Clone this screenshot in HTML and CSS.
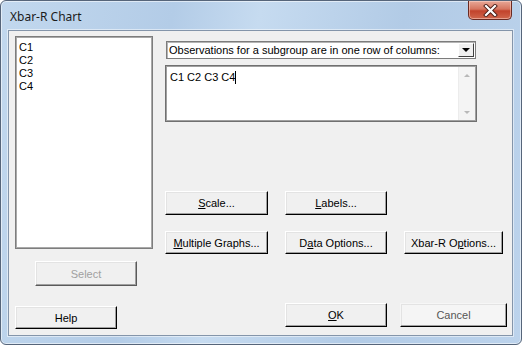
FILE: index.html
```html
<!DOCTYPE html>
<html lang="en">
<head>
    <meta charset="UTF-8">
    <title>Xbar-R Chart</title>
    <link rel="stylesheet" href="styles.css">
</head>
<body>
    <div class="window">
        <div class="titlebar">
            <span class="title">Xbar-R Chart</span>
            <div class="close-button">
                <svg width="15" height="13" viewBox="0 0 15 13">
                    <path d="M3 2 L12 11 M12 2 L3 11" stroke="#4a1d16" stroke-width="4" stroke-linecap="square"/>
                    <path d="M3 2 L12 11 M12 2 L3 11" stroke="#ffffff" stroke-width="2.2" stroke-linecap="square"/>
                </svg>
            </div>
        </div>
        <div class="client">
            <div class="left-col">
                <div class="listbox">
                    <div class="list-item">C1</div>
                    <div class="list-item">C2</div>
                    <div class="list-item">C3</div>
                    <div class="list-item">C4</div>
                </div>
                <button class="btn btn-select" disabled>Select</button>
                <button class="btn btn-help">Help</button>
            </div>
            <div class="right-col">
                <div class="combo">
                    <span class="combo-text">Observations for a subgroup are in one row of columns:</span>
                    <span class="combo-arrow"><span class="arrow-down"></span></span>
                </div>
                <div class="edit">
                    <div class="edit-text">C1 C2 C3 C4<span class="caret"></span></div>
                    <div class="vscroll">
                        <span class="scroll-up"></span>
                        <span class="scroll-down"></span>
                    </div>
                </div>
                <div class="btn-row row-one">
                    <button class="btn w103"><u>S</u>cale...</button>
                    <button class="btn w102"><u>L</u>abels...</button>
                </div>
                <div class="btn-row row-two">
                    <button class="btn w103"><u>M</u>ultiple Graphs...</button>
                    <button class="btn w102">D<u>a</u>ta Options...</button>
                    <button class="btn w99">Xbar-R O<u>p</u>tions...</button>
                </div>
                <div class="btn-row footer">
                    <button class="btn btn-ok"><u>O</u>K</button>
                    <button class="btn btn-cancel">Cancel</button>
                </div>
            </div>
        </div>
    </div>
</body>
</html>
```

FILE: styles.css
```css
body {
    margin: 0;
    padding: 0;
    background: #ffffff;
    font-family: 'Liberation Sans', Arial, sans-serif;
}
.window {
    width: 522px;
    height: 345px;
    box-sizing: border-box;
    border: 1px solid #56657a;
    border-radius: 6px;
    background: linear-gradient(100deg, #c2d8ee 0%, #b3cce7 30%, #c6dbf0 45%, #b2cbe6 70%, #bcd3ec 100%);
    box-shadow: inset 0 0 0 1px rgba(255,255,255,0.55);
    padding: 0 8px 8px 7px;
    display: flex;
    flex-direction: column;
}
.titlebar {
    height: 29px;
    display: flex;
    align-items: flex-start;
}
.title {
    font-family: 'Noto Sans', 'Open Sans', sans-serif;
    font-size: 12px;
    color: #1b1b1b;
    margin: 7px 0 0 2px;
}
.close-button {
    margin-left: auto;
    margin-right: 1px;
    width: 44px;
    height: 19px;
    box-sizing: border-box;
    border: 1px solid #6a2a22;
    border-top: none;
    border-radius: 0 0 5px 5px;
    background: linear-gradient(#e8a897 0%, #d6755f 45%, #c2432c 55%, #d0664c 100%);
    box-shadow: inset 0 0 0 1px rgba(255,220,210,0.5);
    display: flex;
    align-items: center;
    justify-content: center;
}
.client {
    flex: 1;
    background: #f0f0f0;
    border: 1px solid #8495aa;
    box-shadow: 0 0 0 1px rgba(255,255,255,0.5);
    display: flex;
    font-size: 11px;
    color: #000;
}
.left-col {
    padding: 5px 0 0 6px;
    width: 138px;
    display: flex;
    flex-direction: column;
    align-items: flex-start;
}
.listbox {
    width: 138px;
    height: 213px;
    box-sizing: border-box;
    background: #ffffff;
    border: 1px solid #7d7d7d;
    box-shadow: inset 1px 1px 0 #a9a9a9, inset -1px -1px 0 #a9a9a9;
    padding: 4px 3px;
}
.list-item {
    height: 13px;
    line-height: 13px;
    font-size: 11px;
}
.btn {
    font-family: 'Liberation Sans', Arial, sans-serif;
    font-size: 11px;
    color: #000;
    background: #f0f0f0;
    border: 1px solid;
    border-color: #ffffff #000000 #000000 #ffffff;
    box-shadow: inset -1px -1px 0 #a0a0a0, inset 1px 1px 0 #e3e3e3;
    padding: 0;
    margin: 0;
    box-sizing: border-box;
}
.btn u {
    text-decoration: underline;
}
.btn-select {
    margin: 12px 0 0 20px;
    width: 102px;
    height: 25px;
    color: #a0a0a0;
    border-color: #ffffff #5a5a5a #5a5a5a #ffffff;
}
.btn-help {
    margin-top: 20px;
    width: 102px;
    height: 23px;
}
.right-col {
    padding: 10px 0 0 12px;
    display: flex;
    flex-direction: column;
}
.combo {
    margin-left: 1px;
    width: 310px;
    height: 18px;
    box-sizing: border-box;
    background: #ffffff;
    border: 1px solid #7c7c7c;
    box-shadow: inset 1px 1px 0 #b5b5b5;
    display: flex;
    align-items: center;
}
.combo-text {
    padding-left: 2px;
    flex: 1;
    white-space: nowrap;
}
.combo-arrow {
    width: 16px;
    height: 14px;
    margin-right: 1px;
    box-sizing: border-box;
    background: #f0f0f0;
    border: 1px solid;
    border-color: #ffffff #404040 #404040 #ffffff;
    display: flex;
    align-items: center;
    justify-content: center;
}
.arrow-down {
    width: 0;
    height: 0;
    border-left: 4px solid transparent;
    border-right: 4px solid transparent;
    border-top: 4px solid #000;
}
.edit {
    margin-top: 6px;
    width: 312px;
    height: 57px;
    box-sizing: border-box;
    background: #ffffff;
    border: 1px solid #707070;
    box-shadow: inset 1px 1px 0 #a0a0a0, inset -1px -1px 0 #a0a0a0;
    display: flex;
    padding: 1px;
}
.edit-text {
    flex: 1;
    padding: 4px 3px;
    line-height: 13px;
    font-size: 11px;
}
.caret {
    display: inline-block;
    width: 1px;
    height: 13px;
    background: #000;
    vertical-align: -3px;
}
.vscroll {
    width: 17px;
    background: #f4f4f4;
    border-left: 1px solid #ececec;
    display: flex;
    flex-direction: column;
    justify-content: space-between;
    align-items: center;
    padding: 7px 0 6px;
    box-sizing: border-box;
}
.scroll-up {
    width: 0;
    height: 0;
    border-left: 3px solid transparent;
    border-right: 3px solid transparent;
    border-bottom: 3px solid #b8b8b8;
}
.scroll-down {
    width: 0;
    height: 0;
    border-left: 3px solid transparent;
    border-right: 3px solid transparent;
    border-top: 3px solid #b8b8b8;
}
.btn-row {
    display: flex;
    gap: 17px;
}
.row-one {
    margin-top: 69px;
}
.row-one .btn {
    height: 24px;
}
.row-two {
    margin-top: 16px;
}
.row-two .btn {
    height: 23px;
}
.w103 { width: 103px; }
.w102 { width: 102px; }
.w99 { width: 99px; }
.footer {
    margin-top: 49px;
    gap: 13px;
}
.btn-ok {
    margin-left: 120px;
    width: 102px;
    height: 24px;
}
.btn-cancel {
    width: 107px;
    height: 24px;
    color: #555;
    border-left-color: #f6f6f6;
    border-top-color: #f6f6f6;
    background: #f5f5f5;
}
```
